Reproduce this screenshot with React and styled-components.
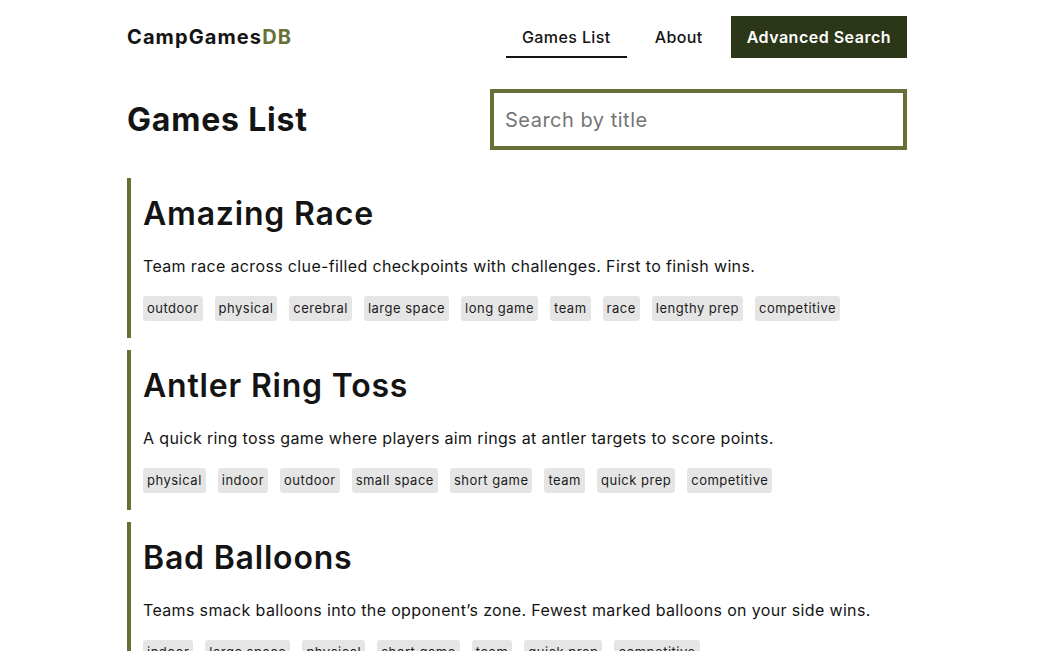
import React from 'react';
import styled, { createGlobalStyle } from 'styled-components';

const GlobalStyle = createGlobalStyle`
	* {
		box-sizing: border-box;
	}
	body {
		margin: 0;
		padding-right: 10px;
		background: #ffffff;
		color: #141414;
		font-family: Inter, 'Open Sans', sans-serif;
	}
`;

const OLIVE = '#667137';
const DARK = '#2c3618';

const Page = styled.div`
	width: 780px;
	margin: 0 auto;
	padding-top: 16px;
`;

const Header = styled.header`
	display: flex;
	align-items: center;
	justify-content: space-between;
	height: 42px;
`;

const Logo = styled.a`
	font-size: 20px;
	font-weight: 700;
	color: #141414;
	text-decoration: none;
	letter-spacing: 1.1px;

	& span {
		color: ${OLIVE};
	}
`;

const Nav = styled.nav`
	display: flex;
	align-items: stretch;
	gap: 12px;
	height: 42px;
`;

const NavLink = styled.a`
	display: flex;
	align-items: center;
	padding: 0 16px;
	font-size: 16px;
	font-weight: 500;
	letter-spacing: 0.4px;
	color: #141414;
	text-decoration: none;
	border-bottom: 2px solid ${(p) => (p.$active ? '#141414' : 'transparent')};
	border-top: 2px solid transparent;
`;

const SearchButton = styled.a`
	display: flex;
	align-items: center;
	padding: 0 16px;
	font-size: 16px;
	font-weight: 600;
	letter-spacing: 0.5px;
	color: #ffffff;
	background: ${DARK};
	text-decoration: none;
`;

const TitleRow = styled.div`
	display: flex;
	align-items: center;
	justify-content: space-between;
	margin-top: 31px;
	margin-bottom: 28px;
`;

const Title = styled.h1`
	margin: 0;
	font-size: 32px;
	font-weight: 700;
	letter-spacing: 0.8px;
`;

const SearchInput = styled.input`
	width: 417px;
	height: 61px;
	border: 4px solid ${OLIVE};
	padding: 0 11px;
	font-family: inherit;
	font-size: 20px;
	letter-spacing: 0.5px;
	color: #141414;
	outline: none;

	&::placeholder {
		color: #757575;
	}
`;

const List = styled.main`
	display: flex;
	flex-direction: column;
	gap: 12px;
`;

const Card = styled.article`
	border-left: 4px solid ${OLIVE};
	padding: 12px 12px 17px 12px;
`;

const GameName = styled.h2`
	margin: 0;
	font-size: 32px;
	line-height: 48px;
	font-weight: 600;
	letter-spacing: 0.8px;
`;

const Description = styled.p`
	margin: 16px 0 18px;
	font-size: 16px;
	line-height: 24px;
	letter-spacing: 0.35px;
`;

const Tags = styled.ul`
	display: flex;
	flex-wrap: wrap;
	gap: 12px;
	margin: 0;
	padding: 0;
	list-style: none;
`;

const Tag = styled.li`
	background: #e5e5e5;
	border-radius: 3px;
	padding: 4px;
	font-size: 13px;
	line-height: 17px;
	letter-spacing: 0.5px;
	color: #1c1c1c;
`;

const games = [
	{
		name: 'Amazing Race',
		description:
			'Team race across clue-filled checkpoints with challenges. First to finish wins.',
		tags: ['outdoor', 'physical', 'cerebral', 'large space', 'long game', 'team', 'race', 'lengthy prep', 'competitive'],
	},
	{
		name: 'Antler Ring Toss',
		description: 'A quick ring toss game where players aim rings at antler targets to score points.',
		tags: ['physical', 'indoor', 'outdoor', 'small space', 'short game', 'team', 'quick prep', 'competitive'],
	},
	{
		name: 'Bad Balloons',
		description:
			'Teams smack balloons into the opponent\u2019s zone. Fewest marked balloons on your side wins.',
		tags: ['indoor', 'large space', 'physical', 'short game', 'team', 'quick prep', 'competitive'],
	},
];

export default function App() {
	return (
		<>
			<GlobalStyle />
			<Page>
				<Header>
					<Logo href="#">
						CampGames<span>DB</span>
					</Logo>
					<Nav>
						<NavLink href="#" $active>
							Games List
						</NavLink>
						<NavLink href="#">About</NavLink>
						<SearchButton href="#">Advanced Search</SearchButton>
					</Nav>
				</Header>
				<TitleRow>
					<Title>Games List</Title>
					<SearchInput placeholder="Search by title" />
				</TitleRow>
				<List>
					{games.map((game) => (
						<Card key={game.name}>
							<GameName>{game.name}</GameName>
							<Description>{game.description}</Description>
							<Tags>
								{game.tags.map((tag) => (
									<Tag key={tag}>{tag}</Tag>
								))}
							</Tags>
						</Card>
					))}
				</List>
			</Page>
		</>
	);
}
